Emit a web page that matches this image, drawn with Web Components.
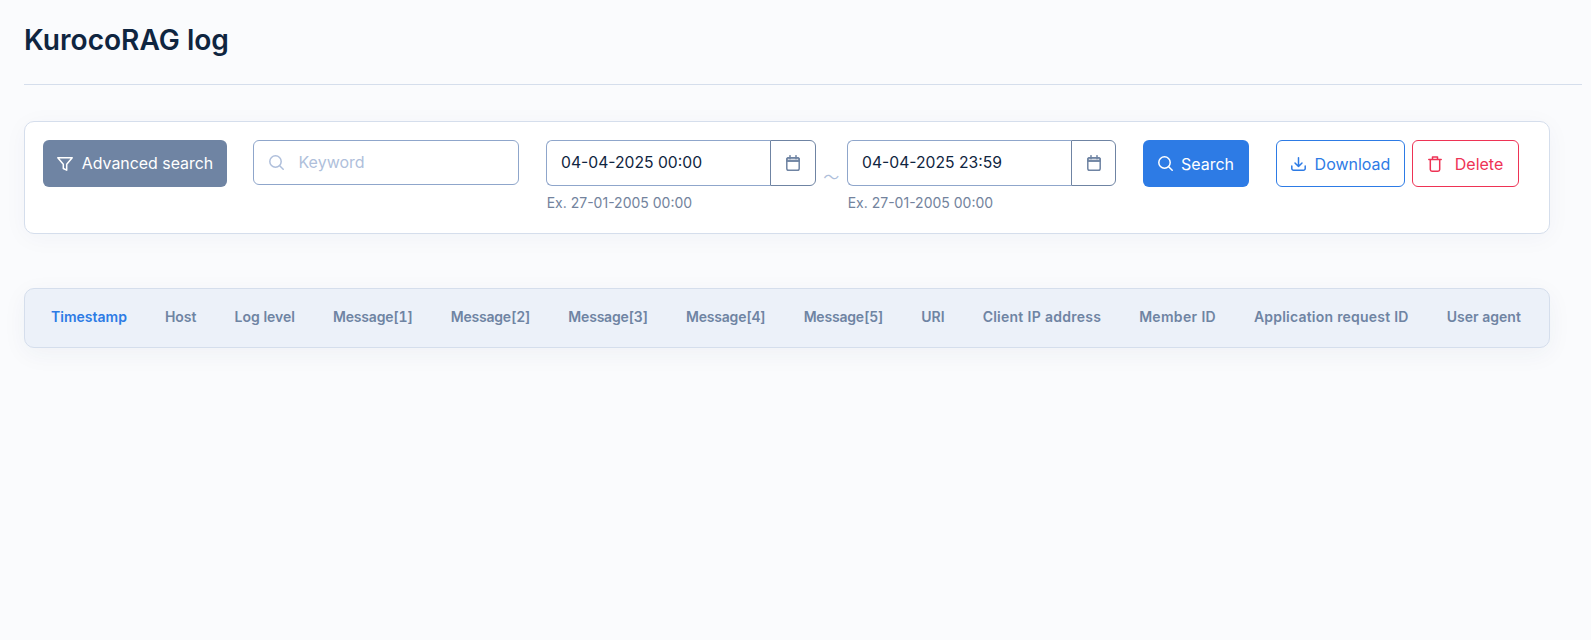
<!DOCTYPE html>
<html lang="en"><head><meta charset="utf-8"><title>KurocoRAG log</title>
<style>
html,body{margin:0;height:640px;overflow:hidden;background:#fafbfd;font-family:Inter,"Liberation Sans",sans-serif;color:#0f2540}
</style></head><body>
<log-page></log-page>
<script>
const icons={
filter:[16,14,'<path d="M.8.8h14.4L9.700 7.300v5.900L6.300 11.500V7.300z"/>'],
search:[15,15,'<circle cx="6.500" cy="6.500" r="5.700"/><path d="M10.700 10.700 14.200 14.200"/>'],
cal:[14,16,'<path d="M.8 6V4.500a1.800 1.800 0 0 1 1.800-1.800h8.800a1.800 1.800 0 0 1 1.800 1.800V6z" fill="currentColor" fill-opacity=".3"/><rect x=".8" y="2.700" width="12.400" height="12.500" rx="1.800"/><path d="M4 .7v3M10 .7v3M.8 6h12.400"/>'],
down:[15,14,'<path d="M7.500.8v8.700M4 6l3.500 3.500L11 6M.8 9v2.400a1.800 1.800 0 0 0 1.800 1.800h9.800a1.800 1.800 0 0 0 1.800-1.800V9"/>'],
trash:[14,16,'<path d="M.8 3.500h12.400M4.500 3.500V.9h5v2.600M2.300 3.500v10a1.700 1.700 0 0 0 1.700 1.700h6a1.700 1.700 0 0 0 1.700-1.700v-10"/>']
};
customElements.define('ui-icon',class extends HTMLElement{connectedCallback(){if(this.shadowRoot)return;const r=this.attachShadow({mode:'open'});const [w,h,p]=icons[this.getAttribute('name')];r.innerHTML=`<style>:host{display:inline-flex;flex:none;width:${w}px;height:${h}px}svg{width:100%;height:100%;fill:none;stroke:currentColor;stroke-width:1.500;stroke-linecap:round;stroke-linejoin:round}</style><svg viewBox="0 0 ${w} ${h}">${p}</svg>`}});
customElements.define('ui-button',class extends HTMLElement{connectedCallback(){if(this.shadowRoot)return;const r=this.attachShadow({mode:'open'});r.innerHTML=`<style>:host{display:inline-flex;align-items:center;justify-content:center;box-sizing:border-box;height:47px;border-radius:6px;font-size:16px;white-space:nowrap;border:1px solid transparent;flex:none}
:host([kind=gray]){background:#6f84a3;color:#fff;width:184px;gap:9px;font-size:15.900px}
:host([kind=primary]){background:#2d7be5;color:#fff;width:106px;gap:8px;margin-left:27px}
:host([kind=outline]){background:#fff;color:#2d7be5;border-color:#2d7be5;width:129px;gap:9px;margin-left:27px}
:host([kind=danger]){background:#fff;color:#ee3355;border-color:#ee3355;width:107px;gap:13px;margin-left:7px}</style><slot name="icon"></slot><slot></slot>`}});
customElements.define('keyword-input',class extends HTMLElement{connectedCallback(){if(this.shadowRoot)return;const r=this.attachShadow({mode:'open'});r.innerHTML=`<style>:host{display:flex;align-items:center;box-sizing:border-box;width:266px;height:45px;margin-left:26px;padding:0 15px 1px;gap:14.500px;border:1px solid #8fa6cb;border-radius:6px;background:#fff;color:#afbfdb;font-size:16px;flex:none}</style><ui-icon name="search"></ui-icon><span>Keyword</span>`}});
customElements.define('date-field',class extends HTMLElement{connectedCallback(){if(this.shadowRoot)return;const r=this.attachShadow({mode:'open'});r.innerHTML=`<style>:host{display:block;width:269.500px;flex:none}
.box{display:flex;box-sizing:border-box;height:46px;background:#fff;border-radius:6px}
.val{flex:1;display:flex;align-items:center;padding:0 0 2px 14px;font-size:15.700px;color:#0f2540;border:1px solid #8fa6cb;border-right:0;border-radius:6px 0 0 6px}
.btn{box-sizing:border-box;width:45.500px;padding-left:1px;display:flex;align-items:center;justify-content:center;border:1px solid #6f84a3;border-radius:0 6px 6px 0;color:#6f84a3}
.hint{margin-top:8px;font-size:14px;line-height:18px;color:#73839d;padding-left:.7px}</style><div class="box"><div class="val">${this.getAttribute('value')}</div><div class="btn"><ui-icon name="cal"></ui-icon></div></div><div class="hint">Ex. 27-01-2005 00:00</div>`}});
customElements.define('search-card',class extends HTMLElement{connectedCallback(){if(this.shadowRoot)return;const r=this.attachShadow({mode:'open'});r.innerHTML=`<style>:host{display:flex;align-items:flex-start;box-sizing:border-box;width:1526px;height:113px;padding:18px;background:#fff;border:1px solid #d5deec;border-radius:10px;box-shadow:0 4px 24px rgba(30,50,90,.04)}
.dates{display:flex;align-items:flex-start;margin-left:27px;flex:none}
.tilde{width:31.500px;flex:none;text-align:center;color:#afbfdb;font:400 16px/24px "Noto Sans CJK JP",sans-serif;padding-top:24px}</style>
<slot name="before"></slot><div class="dates"><slot name="from"></slot><div class="tilde">〜</div><slot name="to"></slot></div><slot name="after"></slot>`}});
customElements.define('tab-bar',class extends HTMLElement{connectedCallback(){if(this.shadowRoot)return;const r=this.attachShadow({mode:'open'});const items=this.getAttribute('items').split('|');r.innerHTML=`<style>:host{display:flex;align-items:center;gap:38px;box-sizing:border-box;width:1526px;height:60px;padding:0 26px 4px;margin-top:54px;background:#ecf1f9;border:1px solid #d5deec;border-radius:10px;box-shadow:0 6px 24px rgba(30,50,90,.05);font-size:14px;font-weight:600;color:#6f84a3;white-space:nowrap;font-variant-numeric:tabular-nums}
span:first-of-type{color:#2d7be5}</style>`+items.map(t=>{const [n,l]=t.split('^');return `<span style="letter-spacing:${l||0}px">${n}</span>`}).join('')}});
customElements.define('log-page',class extends HTMLElement{connectedCallback(){if(this.shadowRoot)return;const r=this.attachShadow({mode:'open'});r.innerHTML=`<style>:host{display:block;padding:0 9px 0 24px}
h1{margin:0;font-size:28.100px;line-height:34px;font-weight:600;color:#0f2540;box-sizing:border-box;padding-top:23px;height:84px}
hr{margin:0 0 36px;border:0;border-top:1px solid #d5deec}</style>
<h1>KurocoRAG log</h1><hr>
<search-card>
<ui-button slot="before" kind="gray"><ui-icon slot="icon" name="filter"></ui-icon>Advanced search</ui-button>
<keyword-input slot="before"></keyword-input>
<date-field slot="from" value="04-04-2025 00:00"></date-field>
<date-field slot="to" value="04-04-2025 23:59" style="width:269px"></date-field>
<ui-button slot="after" kind="primary"><ui-icon slot="icon" name="search"></ui-icon>Search</ui-button>
<ui-button slot="after" kind="outline"><ui-icon slot="icon" name="down"></ui-icon>Download</ui-button>
<ui-button slot="after" kind="danger"><ui-icon slot="icon" name="trash"></ui-icon>Delete</ui-button>
</search-card>
<tab-bar items="Timestamp|Host|Log level|Message[1]^-0.2|Message[2]^-0.2|Message[3]^-0.2|Message[4]^-0.2|Message[5]^-0.2|URI|Client IP address^0.25|Member ID^0.3|Application request ID^0.2|User agent"></tab-bar>`}});
</script></body></html>
